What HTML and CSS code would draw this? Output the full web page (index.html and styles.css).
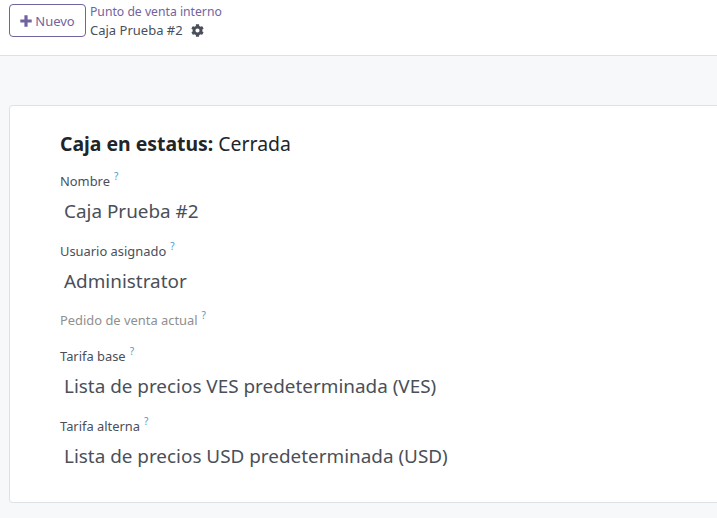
FILE: index.html
```html
<!DOCTYPE html>
<html lang="es">
<head>
<meta charset="utf-8">
<title>Caja Prueba #2</title>
<link rel="stylesheet" href="styles.css">
</head>
<body>
<header class="control-panel">
  <button class="btn-new" type="button">
    <svg class="plus" viewBox="0 0 12 12" aria-hidden="true"><path d="M4.4 0.3h3.2v4.1h4.1v3.2H7.6v4.1H4.4V7.6H0.3V4.4h4.1z"/></svg>
    <span>Nuevo</span>
  </button>
  <div class="crumbs">
    <a class="crumb-link">Punto de venta interno</a>
    <div class="crumb-current">
      <span>Caja Prueba #2</span>
      <svg class="gear" viewBox="0 0 512 512" aria-hidden="true"><path d="M487.4 315.7l-42.6-24.6c4.3-23.2 4.3-47 0-70.2l42.6-24.6c4.9-2.8 7.1-8.6 5.5-14-11.1-35.6-30-67.8-54.7-94.6-3.8-4.1-10-5.1-14.8-2.3L380.8 110c-17.9-15.4-38.5-27.3-60.8-35.1V25.8c0-5.6-3.9-10.5-9.4-11.7-36.7-8.2-74.3-7.8-109.2 0-5.5 1.2-9.4 6.1-9.4 11.7V75c-22.2 7.9-42.8 19.8-60.8 35.1L88.7 85.5c-4.9-2.8-11-1.9-14.8 2.3-24.7 26.7-43.6 58.9-54.7 94.6-1.7 5.4.6 11.2 5.5 14L67.3 221c-4.3 23.2-4.3 47 0 70.2l-42.6 24.6c-4.9 2.8-7.1 8.6-5.5 14 11.1 35.6 30 67.8 54.7 94.6 3.8 4.1 10 5.1 14.8 2.3l42.6-24.6c17.9 15.4 38.5 27.3 60.8 35.1v49.2c0 5.6 3.9 10.5 9.4 11.7 36.7 8.2 74.3 7.8 109.2 0 5.5-1.2 9.4-6.1 9.4-11.7v-49.2c22.2-7.9 42.8-19.8 60.8-35.1l42.6 24.6c4.9 2.8 11 1.9 14.8-2.3 24.7-26.7 43.6-58.9 54.7-94.6 1.5-5.5-.7-11.3-5.6-14.1zM256 336c-44.1 0-80-35.9-80-80s35.9-80 80-80 80 35.9 80 80-35.9 80-80 80z"/></svg>
    </div>
  </div>
</header>
<main class="content">
  <section class="sheet">
    <h2 class="status"><strong>Caja en estatus:</strong> Cerrada</h2>
    <div class="field">
      <label class="label">Nombre<sup class="help">?</sup></label>
      <div class="value">Caja Prueba #2</div>
    </div>
    <div class="field">
      <label class="label">Usuario asignado<sup class="help">?</sup></label>
      <div class="value">Administrator</div>
    </div>
    <div class="field field-empty">
      <label class="label label-muted">Pedido de venta actual<sup class="help">?</sup></label>
    </div>
    <div class="field">
      <label class="label">Tarifa base<sup class="help">?</sup></label>
      <div class="value">Lista de precios VES predeterminada (VES)</div>
    </div>
    <div class="field">
      <label class="label">Tarifa alterna<sup class="help">?</sup></label>
      <div class="value">Lista de precios USD predeterminada (USD)</div>
    </div>
  </section>
</main>
</body>
</html>
```
FILE: styles.css
```css
* { box-sizing: border-box; }
html, body { margin: 0; height: 100%; overflow: hidden; }
body {
  width: 717px;
  height: 518px;
  background: #f7f8fa;
  font-family: "Noto Sans", "Open Sans", sans-serif;
  color: #4a4f59;
}
.control-panel {
  height: 56px;
  background: #fff;
  border-bottom: 1px solid #dee2e6;
  display: flex;
  align-items: flex-start;
  gap: 4px;
  padding: 4px 0 0 9px;
}
.btn-new {
  width: 77px;
  height: 33px;
  display: flex;
  align-items: center;
  justify-content: center;
  gap: 3px;
  padding: 0;
  background: #fff;
  border: 1px solid #71639e;
  border-radius: 4px;
  color: #71639e;
  font: 13px/18px "Noto Sans", sans-serif;
}
.plus { width: 12px; height: 12px; fill: #71639e; }
.crumbs { font-size: 13px; line-height: 18px; margin-top: -1px; }
.crumb-link { display: block; color: #71639e; height: 18px; font-size: 12.2px; }
.crumb-current { display: flex; align-items: center; gap: 8px; color: #4a4f59; height: 18px; }
.gear { width: 13px; height: 13px; fill: #4a4f59; }
.content { padding: 49px 0 0 9px; }
.sheet {
  width: 720px;
  height: 398px;
  background: #fff;
  border: 1px solid #dee2e6;
  border-right: 0;
  border-radius: 4px 0 0 4px;
  padding: 25px 0 0 50px;
}
.status {
  margin: 0;
  font-size: 19.4px;
  line-height: 26px;
  font-weight: 400;
  color: #212529;
}
.status strong { font-weight: 700; }
.field { height: 56px; }
.status + .field { margin-top: 15px; }
.field + .field { margin-top: 13.5px; }
.field-empty { height: 22.5px; }
.label { display: block; font-size: 12.9px; line-height: 18px; color: #4a4f59; }
.label-muted { color: #8f8f8f; }
.help {
  color: #4d9cc4;
  font-size: 10px;
  line-height: 0;
  margin-left: 4px;
  vertical-align: 6px;
  font-weight: 400;
}
.value {
  margin-top: 9px;
  padding-left: 4px;
  font-size: 18.9px;
  line-height: 25px;
  color: #4a4f59;
}
```
